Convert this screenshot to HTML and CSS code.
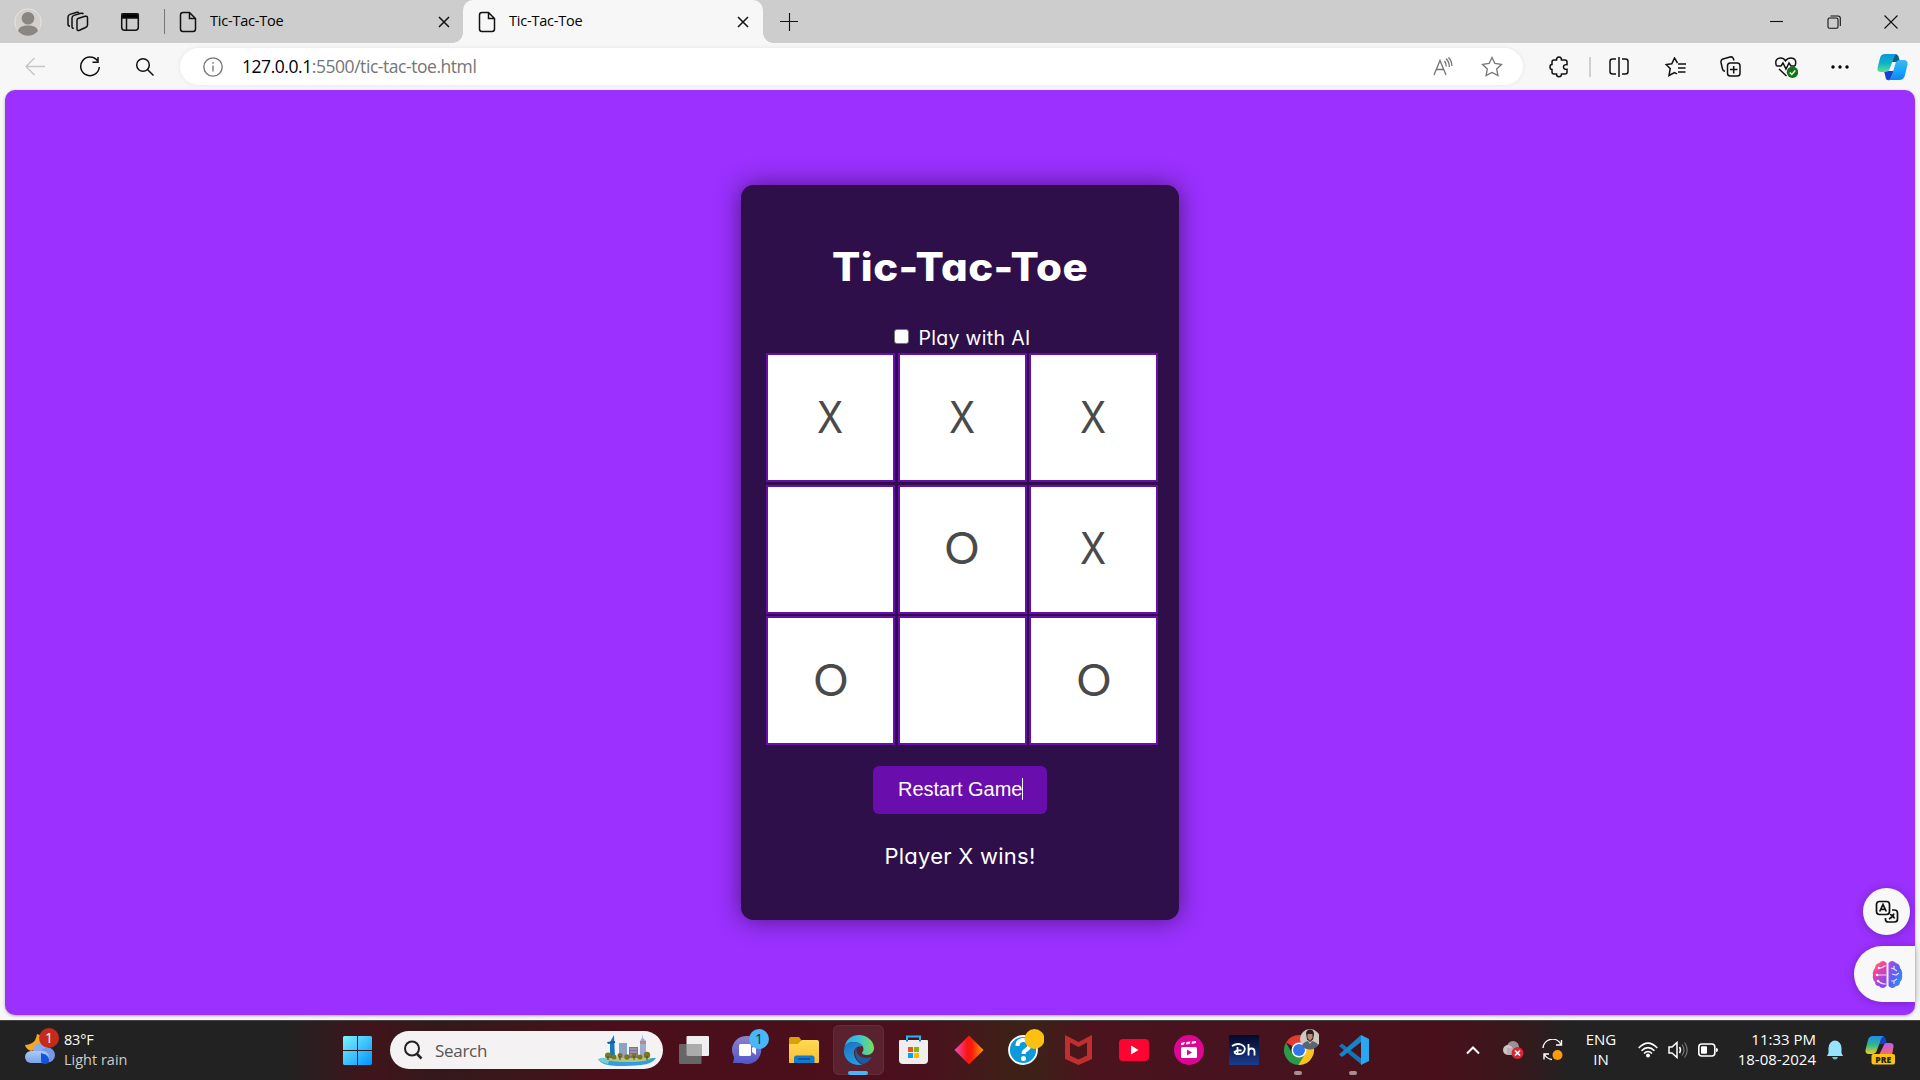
FILE: index.html
```html
<!DOCTYPE html>
<html lang="en">
<head>
<meta charset="utf-8">
<title>Tic-Tac-Toe</title>
<link rel="stylesheet" href="styles.css">
</head>
<body>
<header class="tabstrip">
  <span class="slot w56"><svg width="28" height="28" viewBox="0 0 28 28"><circle cx="14" cy="14" r="13.2" fill="#d3d0cc" stroke="#e6e4e1"/><circle cx="14" cy="10.3" r="6.3" fill="#8b8682"/><path d="M4 23c1-4 4.500-5.500 10-5.500S23 19 24 23a13 13 0 0 1-20 0z" fill="#8b8682"/></svg></span>
  <span class="slot w44"><svg class="line" width="22" height="22" viewBox="0 0 22 22"><path d="M11 7.500 18 5.300q2.500-.6 2.500 1.700v7q0 1.800-2 2.500l-6 2.800q-2.500 1-2.500-1.500V9.500q0-1.600 1-2zM6.800 17.300Q5 17.500 5 15.500V7q0-2 2-2.600l7-2.100q1.800-.4 2.300.8M3 15.200Q1 15.200 1 13V6q0-2 2-2.600l7-2.100q1.500-.4 2 .5"/></svg></span>
  <span class="slot w60"><svg class="line" width="20" height="20" viewBox="0 0 20 20"><rect x="1.700" y="1.700" width="16.600" height="16.600" rx="3"/><path d="M2 2h16v4H2z" fill="#000"/><path d="M6.500 6v12"/></svg></span>
  <span class="slot w8"><i class="tabdivider"></i></span>
  <div class="tab">
    <svg class="line doc" width="18" height="22" viewBox="0 0 18 22"><path d="M4 1.500h6.500l6 6V18q0 2.500-2.500 2.500H4q-2.500 0-2.500-2.500V4Q1.500 1.500 4 1.500zM10.500 1.500v6h6"/></svg>
    <span class="tabtitle">Tic-Tac-Toe</span>
    <svg class="line" width="12" height="12" viewBox="0 0 12 12"><path d="M1 1l10 10M11 1 1 11"/></svg>
  </div>
  <div class="tab active">
    <svg class="line doc" width="18" height="22" viewBox="0 0 18 22"><path d="M4 1.500h6.500l6 6V18q0 2.500-2.500 2.500H4q-2.500 0-2.500-2.500V4Q1.500 1.500 4 1.500zM10.500 1.500v6h6"/></svg>
    <span class="tabtitle">Tic-Tac-Toe</span>
    <svg class="line" width="12" height="12" viewBox="0 0 12 12"><path d="M1 1l10 10M11 1 1 11"/></svg>
  </div>
  <span class="slot w52"><svg class="line thin" width="18" height="18" viewBox="0 0 18 18"><path d="M9.500 0v18M0 8.500h18"/></svg></span>
  <div class="winbtns">
    <span class="slot w57"><svg class="line thin" width="13" height="13" viewBox="0 0 13 13"><path d="M0 6.500h13"/></svg></span>
    <span class="slot w57"><svg class="line thin" width="14" height="14" viewBox="0 0 14 14"><rect x="1" y="3" width="10" height="10.300" rx="1.500"/><path d="M3.500 1H11q2.300 0 2.300 2.300V11"/></svg></span>
    <span class="slot w57"><svg class="line thin" width="14" height="14" viewBox="0 0 14 14"><path d="M.5.5l13 13m0-13-13 13"/></svg></span>
  </div>
</header>
<nav class="toolbar">
  <span class="slot w70"><svg class="line pale" width="20" height="20" viewBox="0 0 20 20"><path d="M20 9.500H1M9.500 1 1 9.500 9.500 18"/></svg></span>
  <span class="slot w40"><svg class="line" width="22" height="22" viewBox="0 0 22 22"><path d="M18.500 4.800A9.300 9.300 0 1 0 20.300 11M19 1v5.200h-5.500"/></svg></span>
  <span class="slot w70"><svg class="line" width="20" height="20" viewBox="0 0 20 20"><circle cx="8" cy="8" r="6.300"/><path d="m12.500 12.500 6 6"/></svg></span>
  <div class="omnibox">
    <svg class="line grey" width="20" height="20" viewBox="0 0 20 20"><circle cx="10" cy="10" r="9.200"/><path d="M10 8.500v6M10 5v1.800"/></svg>
    <span class="url"><b>127.0.0.1</b>:5500/tic-tac-toe.html</span>
    <svg class="line grey" width="20" height="20" viewBox="0 0 20 20"><path d="m1 18 6-14.500L13 18M3.200 12.500h7.500M11.500 4q2 2.500 1.700 5.500M13 1.500q3.500 3.500 3.300 8.500M15.500.5Q19 4 18.800 9"/></svg>
    <svg class="line grey star" width="22" height="22" viewBox="0 0 22 22"><path d="m11 1.500 2.900 6 6.600.9-4.800 4.600 1.200 6.600L11 16.500l-5.900 3.100L6.300 13 1.500 8.400l6.600-.9z"/></svg>
  </div>
  <div class="tools">
    <span class="slot w60"><svg class="line" width="20" height="22" viewBox="0 0 20 22"><path d="M7.500 4q0-3 2.500-3t2.500 3h3.500q2 0 2 2v2.700q-3.500-.5-3.500 2.300t3.500 2.300V16q0 2-2 2h-3.500q0 2.800-2.500 2.800T7.500 18H5q-2 0-2-2v-2.500Q1 13.500 1 11t2-2.500V6q0-2 2-2z"/></svg></span>
    <i class="tooldivider"></i>
    <span class="slot w56"><svg class="line" width="20" height="20" viewBox="0 0 20 20"><path d="M10 0v20M7 2H3.500Q1 2 1 4.500v10Q1 17 3.500 17H7M13 2h3.500Q19 2 19 4.500v10q0 2.500-2.500 2.500H13"/></svg></span>
    <span class="slot w56"><svg class="line" width="21" height="20" viewBox="0 0 21 20"><path d="m12.500 6-3-5-2.700 5.700L1 7.500 5.200 11.500 4 18.500l5.500-3 2.500 1.300M13 7h8M13 11h7.500M13 15h7.500"/></svg></span>
    <span class="slot w55"><svg class="line" width="21" height="21" viewBox="0 0 21 21"><rect x="7.500" y="7" width="12.500" height="13" rx="2.800"/><path d="M13.700 10v7.500M10 13.600h7.500M5 15.300Q3 15 2.500 13L1 6.500Q.5 4 3 3l7-2q2.500-.6 3.300 1.500l.7 2"/></svg></span>
    <span class="slot w56"><svg class="line" width="23" height="22" viewBox="0 0 23 22"><path d="M1.500 10C-.5 4.500 2 2 5.500 2q3.300 0 5 2.800Q12.500 2 16 2c3.500 0 6 2.500 4 8M1.500 10H6l2-3 3 6 3-6 2 3h4M4 13l7.500 7"/><circle cx="17.500" cy="16.300" r="5.700" fill="#0d7512" stroke="none"/><path d="m14.800 16.500 2 2 3.500-4" stroke="#fff"/></svg></span>
    <span class="slot w52"><svg width="18" height="6" viewBox="0 0 18 6"><circle cx="2" cy="3" r="1.700"/><circle cx="9" cy="3" r="1.700"/><circle cx="16" cy="3" r="1.700"/></svg></span>
    <span class="slot w52"><svg width="31" height="28" viewBox="0 0 31 28"><defs><linearGradient id="ca" x2="0" y2="1"><stop stop-color="#0c99dc"/><stop offset=".5" stop-color="#0eb0c9"/><stop offset="1" stop-color="#5be18e"/></linearGradient><linearGradient id="cb" x2="0" y2="1"><stop stop-color="#3fb8f3"/><stop offset=".6" stop-color="#12a4fb"/><stop offset="1" stop-color="#1482ef"/></linearGradient></defs><path d="M7 18h10l-4 9q-4 1-4.500-3z" fill="#1742cf"/><path d="M14 1h4q3 0 4 4l1 4h-9z" fill="#125c87"/><path d="M8 1h12q-2.500 1-4 6l-3 8q-1 4-5 4H4q-4 0-3.500-4L3 5q1-4 5-4z" fill="url(#ca)"/><path d="M23 7h4q4 0 3.500 4.500L28 22q-1 5-6 5H11q3-1 4-5l3-10q1-5 5-5z" fill="url(#cb)"/></svg></span>
  </div>
</nav>
<main class="page">
  <section class="card">
    <h1>Tic-Tac-Toe</h1>
    <label class="ai"><i class="checkbox"></i><span>Play with AI</span></label>
    <div class="board">
      <div class="cell"><span class="x">X</span></div><div class="cell"><span class="x">X</span></div><div class="cell"><span class="x">X</span></div>
      <div class="cell"></div><div class="cell"><span class="o">O</span></div><div class="cell"><span class="x">X</span></div>
      <div class="cell"><span class="o">O</span></div><div class="cell"></div><div class="cell"><span class="o">O</span></div>
    </div>
    <div class="restart">Restart Game<i class="caret"></i></div>
    <p class="status">Player X wins!</p>
  </section>
  <div class="translate"><svg class="line" width="24" height="24" viewBox="0 0 24 24"><path d="M4.500 1.500h7q3 0 3 3v7q0 3-3 3h-7q-3 0-3-3v-7q0-3 3-3zM4.700 11.500 8 4.500l3.300 7M6 9.300h4M17 10h2.500q3 0 3 3v6q0 3-3 3h-6q-3 0-3-2.500V18M15 14.500q3 .5 4.500 4M19 13.500q-1.500 4-5 5.500" stroke-width="1.700"/></svg></div>
  <div class="brain"><svg width="31" height="29" viewBox="0 0 31 29"><defs><linearGradient id="bl" x2=".5" y2="1"><stop stop-color="#ff9d2e"/><stop offset=".4" stop-color="#f33fa4"/><stop offset="1" stop-color="#8648f0"/></linearGradient><linearGradient id="br" x1="0" x2="1" y2="1"><stop stop-color="#b746df"/><stop offset=".5" stop-color="#5960f3"/><stop offset="1" stop-color="#18a8fa"/></linearGradient></defs><path d="M14.500 3v23q-4 4-7.500 0-4 0-4-4-3-3-2-7-1-4 2-7 0-4 4-5 4-4 7.500 0z" fill="url(#bl)"/><path d="M16.500 3v23q4 4 7.500 0 4 0 4-4 3-3 2-7 1-4-2-7 0-4-4-5-4-4-7.500 0z" fill="url(#br)"/><path d="M5 15h9M7 8q4 0 5-2h2M6 21q3 3 8 3M19 8l3 1 3 2M22 9V6M20 14l4 1 3-2M19 21h3l3-2M22 21v3" fill="none" stroke="#fff" stroke-opacity=".8" stroke-width="1.200"/><circle cx="5" cy="15" r="1.300" fill="#fff"/><circle cx="7" cy="8" r="1.300" fill="#fff"/><circle cx="6" cy="21" r="1.300" fill="#fff"/></svg></div>
</main>
<footer class="taskbar">
  <div class="weather">
    <svg width="36" height="38" viewBox="0 0 36 38"><defs><linearGradient id="cl" x2="0" y2="1"><stop stop-color="#a8ccfa"/><stop offset="1" stop-color="#7da2e6"/></linearGradient></defs><path d="M13 7q-1 7-5 9-3 2-7 2 1 4 6 6l14-5V10z" fill="#f6a823"/><circle cx="17" cy="24" r="8" fill="#87aaf0"/><circle cx="23.500" cy="28" r="7.500" fill="#7599e4"/><rect x="1" y="24" width="24" height="12" rx="6" fill="url(#cl)"/><path d="M17 26q8 2 8 7a4 4 0 0 1-8 0z" fill="#1454dc"/><circle cx="25" cy="11" r="10" fill="#c42b1c"/><text x="25" y="16" class="badge1">1</text></svg>
    <div class="wtext"><span class="temp">83°F</span><span class="rain">Light rain</span></div>
  </div>
  <svg class="start" width="29" height="29" viewBox="0 0 29 29"><defs><linearGradient id="w" gradientUnits="userSpaceOnUse" x1="0" y1="0" x2="29" y2="29"><stop stop-color="#7df3ff"/><stop offset="1" stop-color="#0094fc"/></linearGradient></defs><path d="M1 0h13v14H0V1zM15 0h13l1 1v13H15zM0 15h14v14H1l-1-1zM15 15h14v13l-1 1H15z" fill="url(#w)"/></svg>
  <div class="search">
    <svg class="line" width="20" height="20" viewBox="0 0 20 20"><circle cx="9" cy="8.500" r="7" stroke="#222" stroke-width="2"/><path d="m14 14 4.500 4.500" stroke="#222" stroke-width="2.500"/></svg>
    <span class="searchtext">Search</span>
    <svg width="58" height="34" viewBox="0 0 58 34"><path d="M0 26q10-1 20-1h38q-4 6-15 7Q20 34 10 32 3 31 0 26z" fill="#2e9fe0"/><path d="M0 26q3-2 12-1l-2 6Q3 30 0 26z" fill="#78ced2"/><path d="M6 26q24-4 48-1-5 4-24 4-18 0-24-3z" fill="#b8c580"/><path d="M12 25V9l4-7 1 23z" fill="#1678bf"/><path d="M9 9l8-1v2l-7 1z" fill="#105f9f"/><path d="M21 10h8v15h-8z" fill="#71aed0"/><path d="M24 10v15M27 10v15" stroke="#d384aa"/><path d="M31 14h9v11h-9z" fill="#7a7594"/><path d="M32 16h7M32 19h7M32 22h7" stroke="#c4a8bb"/><path d="M42 8l2-3V1l1 4 3 3v17h-6z" fill="#9eacd0"/><path d="M42 8h6v3h-6z" fill="#bd8a79"/><g fill="#777921"><circle cx="10" cy="22.500" r="3"/><circle cx="16" cy="24" r="2.500"/><circle cx="22" cy="22.500" r="2.500"/><circle cx="29" cy="24" r="2.700"/><circle cx="36" cy="22.500" r="2.500"/><circle cx="42" cy="24" r="2.500"/><circle cx="49" cy="22" r="3.200"/></g><g stroke="#633c20"><path d="M10 23v4M22 23v4M36 23v4M49 23v4"/></g></svg>
  </div>
  <div class="apps">
    <span class="app"><svg width="30" height="28" viewBox="0 0 30 28"><rect x="7.500" y="0" width="22.500" height="20" rx="1" fill="#eee"/><rect x="0" y="8" width="22.500" height="20" rx="1" fill="#666"/><path d="M7.500 8h15v12h-14l-1-1z" fill="#ababab"/></svg></span>
    <span class="app"><svg class="raised" width="38" height="38" viewBox="0 0 38 38"><defs><linearGradient id="ch" x2="0" y2="1"><stop stop-color="#8b83c9"/><stop offset="1" stop-color="#5255c9"/></linearGradient></defs><path d="M15 8a14 14 0 1 1-5 27H1q1-3 1-6A14 14 0 0 1 15 8z" fill="url(#ch)"/><rect x="7" y="16" width="12" height="12" rx="1.500" fill="#fff"/><path d="m20 20 4-3v10l-4-3z" fill="#fff"/><circle cx="27" cy="11" r="10" fill="#49b6f8"/><text x="27" y="16" class="badge2">1</text></svg></span>
    <span class="app"><svg width="30" height="28" viewBox="0 0 30 28"><defs><linearGradient id="fo" x2="0" y2="1"><stop stop-color="#ffda55"/><stop offset="1" stop-color="#f8be2e"/></linearGradient></defs><path d="M0 3q0-2 2-2h8l3 4v6H0z" fill="#dba006"/><path d="M0 8h9l4-4h15q2 0 2 2v20q0 1-1 1H0z" fill="url(#fo)"/><path d="M5 27v-5q0-2.500 2.500-2.500H23q2.500 0 2.500 2.500v5z" fill="#127bd0"/><path d="M9 23h12" stroke="#064f94" stroke-width="1.500"/></svg></span>
    <span class="app current"><svg width="30" height="30" viewBox="0 0 30 30"><defs><linearGradient id="e1"><stop stop-color="#1ba4e5"/><stop offset=".5" stop-color="#28bfd0"/><stop offset="1" stop-color="#6edc4a"/></linearGradient><linearGradient id="e2" x2=".4" y2="1"><stop stop-color="#0b65bd"/><stop offset="1" stop-color="#1193df"/></linearGradient></defs><path d="M.5 12C2 4 8 0 15 0c8 0 15 6 15 13 0 4-3 7-7 7-3 0-5-1-5-2 0-.8 1.500-1.600 1.500-4C19.500 9.500 14 7 9 7 5 7 2 9 .5 12z" fill="url(#e1)"/><path d="M.5 12C2 9 5 7 9.500 7c4 0 7.500 1.500 9 4-7 0-9 4-8.500 8 1 6 5 10 9 10.500C8 32-1 24 0 15z" fill="url(#e2)"/><path d="M12.500 12.500C9 17 12 28 20 29q5-2 7.500-6.500.3-1-.7-.6C20 24.500 12 21 12.500 14z" fill="#114a91"/></svg><i class="bar"></i></span>
    <span class="app"><svg width="29" height="30" viewBox="0 0 29 30"><path d="M8 7V1.500h13V7" fill="none" stroke="#27b6ef" stroke-width="2"/><path d="M0 6q0-1 1-1h27q1 0 1 1v19q0 4-4 4H4q-4 0-4-4z" fill="#eee"/><path d="M8 5v1.500M21 5v1.500" stroke="#127bbd" stroke-width="2"/><path d="M9 12h5v5H9z" fill="#f25022"/><path d="M15 12h5v5h-5z" fill="#7fba00"/><path d="M9 18h5v5H9z" fill="#00a4ef"/><path d="M15 18h5v5h-5z" fill="#ffb900"/></svg></span>
    <span class="app"><svg width="30" height="30" viewBox="0 0 30 30"><defs><linearGradient id="di"><stop stop-color="#f34db8"/><stop offset=".45" stop-color="#f91412"/><stop offset=".6" stop-color="#f91d0b"/><stop offset="1" stop-color="#ff9e05"/></linearGradient></defs><path d="M15 .5 29.500 15 15 29.500.500 15z" fill="url(#di)"/></svg></span>
    <span class="app"><svg class="badged" width="38" height="40" viewBox="0 0 38 40"><circle cx="17" cy="22" r="14" fill="#0c9adb" stroke="#fff" stroke-width="1.800"/><path d="M11.500 18q0-6 6-6t6 5q0 3-3.500 5-2.500 1.500-2.500 4" fill="none" stroke="#fff" stroke-width="4"/><circle cx="17.500" cy="30.500" r="2.500" fill="#fff"/><circle cx="28.500" cy="11" r="10" fill="#fcc010"/></svg></span>
    <span class="app"><svg width="27" height="30" viewBox="0 0 27 30"><path d="M0 0 13.500 7 27 0v24l-13.500 6L0 24zM5 7.500v13l8.500 4 8.500-4v-13L13.500 12z" fill="#c02f2e"/></svg></span>
    <span class="app"><svg width="30" height="22" viewBox="0 0 30 22"><rect width="30" height="22" rx="4" fill="#ff0433"/><path d="m12 6.500 7.500 4.500-7.500 4.500z" fill="#fff"/></svg></span>
    <span class="app"><svg width="30" height="30" viewBox="0 0 30 30"><circle cx="15" cy="15" r="15" fill="#dd0692"/><rect x="7" y="12" width="16" height="11" rx="1.500" fill="#fff"/><path d="m7 8 4-1-1 2.500-3 .8zM12.500 7l4-.5-1 2.500-3.500.5zM18 6.500l4-.5v2l-4.500 1z" fill="#fff"/><path d="m13 14.500 5 3-5 3z" fill="#dd0692"/></svg></span>
    <span class="app"><svg width="30" height="30" viewBox="0 0 30 30"><defs><linearGradient id="dh" x2="0" y2="1"><stop stop-color="#04082b"/><stop offset="1" stop-color="#193c8c"/></linearGradient></defs><path d="M0 0h30v30H0z" fill="url(#dh)"/><path d="M3 11q5-3 9-1.500 5 2 3.500 6-1.500 4.500-8 3.500-2-.6-2-2 2-2 7-1.500M8.500 12v8M19.500 9v11.500m0-4q0-3 3-3t3 3v4" fill="none" stroke="#fff" stroke-width="1.800"/></svg></span>
    <span class="app"><svg class="badged" width="38" height="40" viewBox="0 0 38 40"><path d="M5 14.500a15 15 0 0 1 26 0L18 22z" fill="#e33b2e" /><path d="M5 14.500A15 15 0 0 0 18 37l7-11-14-1z" fill="#2a9a48"/><path d="M31 14.500A15 15 0 0 1 17.500 37l7-12L20 15z" fill="#fcc31c"/><circle cx="18" cy="22" r="7.500" fill="#fff"/><circle cx="18" cy="22" r="6" fill="#3076e8"/><circle cx="29" cy="11" r="10" fill="#cfc8c0"/><path d="M21 18q1-4 6-5l2 3 2-3q5 1 6 4a10 10 0 0 1-16 1z" fill="#5c6375"/><path d="M25 5q1-4 4.500-3.500Q33 2 33 6.500l-1 5-3 2.500-3-2.500z" fill="#2a201e"/><path d="M26.500 6h5v4l-2.500 3-2.500-3z" fill="#b98874"/></svg><i class="bar dot"></i></span>
    <span class="app"><svg width="30" height="30" viewBox="0 0 30 30"><path d="m0 11 3-2.500L23 24v6L0 11z" fill="#1674b5"/><path d="M0 19.500 22 0v7L3 22z" fill="#1285cd"/><path d="m22 0 8 4v22l-8 4z" fill="#2aa7ee"/></svg><i class="bar dot"></i></span>
  </div>
  <div class="tray">
    <span class="slot w40"><svg width="14" height="9" viewBox="0 0 14 9"><path d="m1 7.500 6-6 6 6" fill="none" stroke="#fff" stroke-width="2"/></svg></span>
    <span class="slot w40"><svg width="22" height="20" viewBox="0 0 22 20"><circle cx="11" cy="7" r="6" fill="#9d9293"/><circle cx="6" cy="10" r="5" fill="#ccc5c6"/><path d="M5 8h12v7H5z" fill="#b9b0b1"/><circle cx="15.500" cy="13" r="6" fill="#d92632"/><path d="m13 10.500 5 5m0-5-5 5" stroke="#fff" stroke-width="1.700"/></svg></span>
    <span class="slot w40"><svg width="22" height="22" viewBox="0 0 22 22"><path d="M1 9A9.500 9.500 0 0 1 19 5.500M19.500 1v5H14M2 20.500V15h5M2 15q3 5 8 5.500" fill="none" stroke="#fff" stroke-width="1.400"/><circle cx="15.500" cy="16" r="5" fill="#fc9c0c"/></svg></span>
    <span class="lang"><span>ENG</span><span>IN</span></span>
    <span class="slot w30"><svg width="20" height="16" viewBox="0 0 20 16"><g fill="none" stroke="#fff" stroke-width="1.600"><path d="M.7 6Q10-3.800 19.300 6M3.500 8.800q6.500-6.500 13 0M6 11.500q4-4 8 0"/></g><circle cx="10" cy="13.500" r="2" fill="#fff"/></svg></span>
    <span class="slot w30"><svg width="20" height="18" viewBox="0 0 20 18"><path d="M1 6h3l5-4.500v15L4 12H1z" fill="none" stroke="#fff" stroke-width="1.500"/><path d="M11.500 6q2 3 0 6" stroke="#fff" fill="none" stroke-width="1.500"/><path d="M14 3.500q4 5.500 0 11M16.500 1.500q5.500 7.500 0 15" stroke="#777" fill="none" stroke-width="1.200"/></svg></span>
    <span class="slot w30"><svg width="20" height="14" viewBox="0 0 20 14"><rect x=".8" y="1" width="16" height="12" rx="3" fill="none" stroke="#fff" stroke-width="1.600"/><rect x="3" y="3.300" width="6" height="7.400" rx="1" fill="#fff"/><path d="M18 5q2 0 2 2t-2 2z" fill="#fff"/></svg></span>
    <span class="clock"><span class="time">11:33 PM</span><span class="date">18-08-2024</span></span>
    <span class="slot w38"><svg width="16" height="20" viewBox="0 0 16 20"><path d="M1.500 8a6.500 7.500 0 0 1 13 0v5l1.500 3H0l1.500-3z" fill="#95e4fb"/><path d="M5 17h6q-1 2.500-3 2.500T5 17z" fill="#62c5de"/></svg></span>
    <span class="slot w52"><svg width="30" height="30" viewBox="0 0 30 30"><defs><linearGradient id="p1" x2="0" y2="1"><stop stop-color="#1f8ceb"/><stop offset=".5" stop-color="#30b88e"/><stop offset="1" stop-color="#f2d020"/></linearGradient><linearGradient id="p2" x2="0" y2="1"><stop stop-color="#a569ea"/><stop offset=".5" stop-color="#e75bae"/><stop offset="1" stop-color="#f27655"/></linearGradient></defs><path d="M15 1h2q3 0 4 4l1 4h-8z" fill="#1641c5"/><path d="M8 1h11q-3 1-4 6l-3 8q-1 4-5 4H4q-4 0-3.500-4L3 5q1-4 5-4z" fill="url(#p1)"/><path d="M22 8h3q4 0 3.500 4L27 20H14l4-8q1-4 4-4z" fill="url(#p2)"/><rect x="6.500" y="19" width="23.500" height="10.500" rx="2" fill="#fdc40f"/><text x="18.200" y="27.700" class="pre">PRE</text></svg></span>
  </div>
</footer>
</body>
</html>
```
FILE: styles.css
```css
* { box-sizing: border-box; }
body {
  margin: 0;
  width: 1920px;
  height: 1080px;
  overflow: hidden;
  display: flex;
  flex-direction: column;
  background: #f7f7f7;
  font-family: "Open Sans", "Noto Sans", sans-serif;
  color: #000;
}
svg { display: block; flex: none; }
.line { fill: none; stroke: #111; stroke-width: 1.5; }
.thin { stroke-width: 1.1; }
.pale { stroke: #c6c6c6; }
.grey { stroke: #737373; stroke-width: 1.3; }
.slot { display: flex; flex: none; align-items: center; justify-content: center; }
.w8 { width: 8px; } .w30 { width: 30px; } .w38 { width: 38px; } .w40 { width: 40px; }
.w44 { width: 44px; } .w52 { width: 52px; } .w55 { width: 55px; }
.w56 { width: 56px; } .w57 { width: 57px; } .w60 { width: 60px; } .w70 { width: 70px; }

.tabstrip { display: flex; height: 43px; flex: none; background: #cdcdcd; }
.tabdivider { width: 1px; height: 25px; background: #777; }
.tab { position: relative; display: flex; align-items: center; width: 295px; padding: 0 13px 0 11px; }
.tab.active { width: 300px; padding: 0 14px 0 15px; background: #f7f7f7; border-radius: 10px 10px 0 0; }
.tab.active::before, .tab.active::after {
  content: ""; position: absolute; bottom: 0; width: 10px; height: 10px;
}
.tab.active::before { left: -10px; background: radial-gradient(circle at 0 0, #cdcdcd 9.5px, #f7f7f7 10px); }
.tab.active::after { right: -10px; background: radial-gradient(circle at 100% 0, #cdcdcd 9.5px, #f7f7f7 10px); }
.tabtitle { flex: 1; margin-left: 13px; font-size: 14.5px; letter-spacing: -.2px; line-height: 41px; height: 43px; }
.winbtns { display: flex; margin-left: auto; padding-right: 1px; }

.toolbar { display: flex; align-items: center; height: 47px; flex: none; }
.omnibox {
  display: flex; flex: none; align-items: center; width: 1343px; height: 37px;
  padding: 0 20px 0 23px; background: #fff; border-radius: 19px; box-shadow: 0 0 4px #e4e4e4;
}
.url { flex: 1; margin-left: 19px; padding-bottom: 2px; font-size: 17.5px; letter-spacing: -.45px; color: #757575; }
.url b { font-weight: 400; color: #000; }
.star { margin-left: 28px; }
.tools { display: flex; align-items: center; margin-left: 6px; }
.tooldivider { width: 2px; height: 20px; background: #d0d0d0; }

.page {
  position: relative; height: 925px; margin: 0 5px; flex: none;
  display: flex; justify-content: center; align-items: flex-start; padding-top: 95px;
  background: #9b30ff; border-radius: 10px; box-shadow: 0 1px 3px #aaa;
}
.card {
  display: flex; flex-direction: column; align-items: center;
  width: 438px; height: 735px; padding-top: 55px;
  background: #2e0f4a; border-radius: 12.5px; box-shadow: 0 0 25px rgba(0,0,0,.5);
  color: #fff; font-family: Inter, "Open Sans", sans-serif; font-feature-settings: "cv11", "ss03";
}
h1 { margin: 0; font-size: 39px; line-height: 54px; font-weight: 800; letter-spacing: .4px; white-space: nowrap; transform: scaleX(1.075); }
.ai { display: flex; align-items: center; height: 30px; margin: 29px 0 0 4px; font-size: 19.5px; letter-spacing: .3px; }
.ai span { margin-left: 10px; }
.checkbox { width: 15px; height: 15px; margin-top: -3px; background: #fff; border: 1px solid #767676; border-radius: 3px; }
.board { display: grid; grid-template-columns: repeat(3, 129px); grid-auto-rows: 129px; gap: 2.5px; margin-left: 4px; }
.cell {
  display: flex; align-items: center; justify-content: center; padding-bottom: 2px;
  background: #fff; border: 2px solid #6a0dad; color: #4a4a4a; font-size: 44px; line-height: 1;
}
.x { transform: scaleX(.87); }
.o { transform: scaleX(1.08); }
.restart {
  display: flex; align-items: center; width: 174px; height: 48px; margin-top: 21px; padding: 0 0 2px 25px;
  background: #6a0dad; border-radius: 6px; font: 20px "Liberation Sans", Arial, sans-serif; white-space: nowrap;
}
.caret { width: 1px; height: 22px; background: #fff; }
.status { margin: 28px 0 0; font-size: 22px; line-height: 28px; letter-spacing: .25px; white-space: nowrap; }
.translate, .brain { position: absolute; right: 0; display: flex; align-items: center; background: #f8f8f8; box-shadow: 0 1px 8px rgba(0,0,0,.25); }
.translate { right: 5px; top: 798px; width: 47px; height: 47px; border-radius: 50%; justify-content: center; }
.brain { top: 856px; width: 61px; height: 56px; padding-left: 18px; border-radius: 28px 0 0 28px; }

.taskbar {
  display: flex; align-items: center; height: 60px; margin-top: 5px; padding-bottom: 1px; flex: none; color: #fff;
  border-top: 1px solid #484343;
  background: linear-gradient(90deg, #222 0, #222 285px, #40141b 370px, #33191b 440px, #3e151b 540px, #4b0f1c 600px, #4b101d 920px, #3e2017 1010px, #3d2017 1040px, #4b131d 1090px, #46131f 1250px, #49101b 1440px, #3a171b 1510px, #222 1570px, #222 100%);
}
.weather { display: flex; width: 343px; padding-left: 24px; align-items: center; }
.weather svg { margin-top: -9px; }
.wtext { display: flex; flex-direction: column; margin-left: 4px; font-size: 14.5px; line-height: 20px; }
.temp { letter-spacing: -.2px; }
.rain { color: #ccc; }
.badge1 { fill: #fff; font-size: 14px; text-anchor: middle; }
.badge2 { fill: #103044; font-size: 14px; text-anchor: middle; }
.search {
  display: flex; align-items: center; width: 273px; height: 38px; margin-left: 18px; padding: 0 7px 0 13px;
  background: #f4f2f2; border-radius: 19px;
}
.searchtext { flex: 1; margin-left: 12px; color: #555; font-size: 17px; letter-spacing: -.3px; }
.apps { display: flex; margin-left: 3px; }
.app { position: relative; display: flex; align-items: center; justify-content: center; width: 55px; height: 50px; }
.raised { margin: -6px 0 0 5px; }
.badged { margin: -4px 0 0 3px; }
.current::before { content: ""; position: absolute; inset: 0 2px; background: rgba(255,255,255,.08); border: 1px solid rgba(255,255,255,.06); border-radius: 6px; }
.bar { position: absolute; bottom: 0; left: 17px; width: 20px; height: 4px; border-radius: 2px; background: #49b6f8; }
.dot { left: 23px; width: 8px; background: #a58f95; }
.tray { display: flex; align-items: center; margin-left: 72px; height: 100%; }
.lang, .clock { display: flex; flex-direction: column; font-size: 15px; line-height: 20px; padding-bottom: 2px; }
.lang { width: 60px; align-items: center; padding-right: 4px; }
.clock { width: 93px; align-items: flex-end; }
.pre { font-size: 8.500px; font-weight: 800; fill: #222; text-anchor: middle; }
```
